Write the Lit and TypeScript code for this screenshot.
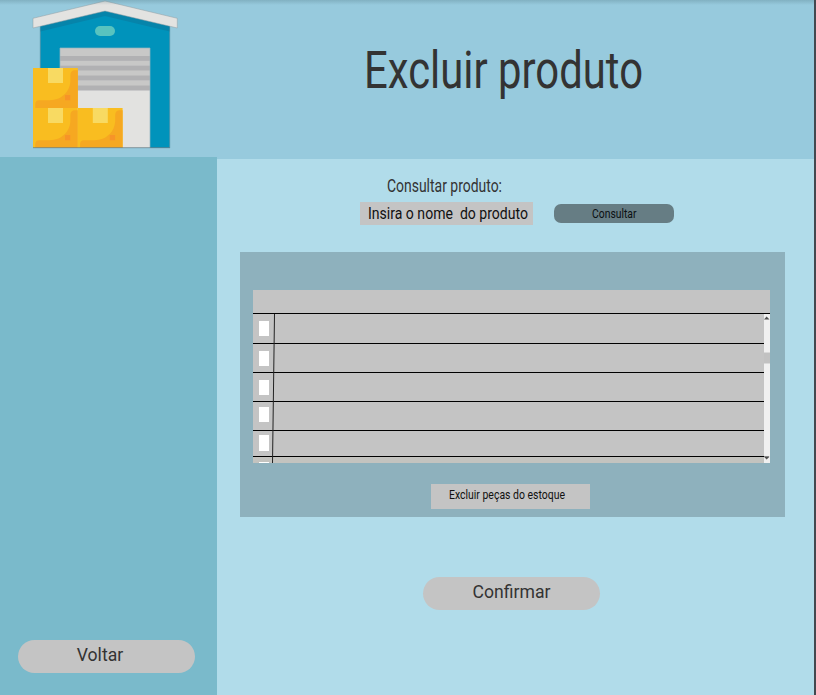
import { LitElement, html, svg, css } from "lit";
import { customElement, property } from "lit/decorators.js";

/** A line of text squeezed horizontally to a given width. */
@customElement("narrow-text")
export class NarrowText extends LitElement {
  @property() text = "";
  @property({ type: Number }) size = 16;
  @property({ type: Number }) width = 100;

  static styles = css`
    :host { display: block; }
    svg { display: block; overflow: visible; }
    text { font-family: Roboto, "Liberation Sans", sans-serif; fill: currentColor; white-space: pre; }
  `;

  render() {
    return html`<svg width=${this.width} height=${this.size}>
      <text x="0" y=${this.size} font-size=${this.size} textLength=${this.width}
        lengthAdjust="spacingAndGlyphs">${this.text}</text>
    </svg>`;
  }
}

@customElement("warehouse-logo")
export class WarehouseLogo extends LitElement {
  static styles = css`
    :host { display: block; }
    svg { display: block; }
  `;

  private box(x: number, y: number) {
    return svg`<g transform="translate(${x} ${y})">
      <rect width="44.8" height="40" fill="#f9bd20"/>
      <path d="M44.8 2.2H42Q37.400 2.200 37.400 7V12C37.400 24 28 32.200 17 32.200H6Q2.300 32.200 2.300 36V40H44.800Z" fill="#f6a821"/>
      <rect x="15" width="15" height="15" fill="#f8da62"/>
      <rect x="32" y="27" width="5.300" height="5.300" fill="#f79428"/>
    </g>`;
  }

  render() {
    return html`<svg width="217" height="157" viewBox="0 0 217 157">
      <path d="M40.300 24L105 9L169.700 24V148H40.300Z" fill="#0093bb"/>
      <path d="M40.300 24L105 8L169.700 24V31.500L105 16L40.300 31.500Z" fill="#0684aa"/>
      <path d="M40.300 27V68M169.700 27V148" stroke="#4f8ea3" stroke-width=".7"/>
      <path d="M33 18.300L105 1L177.300 18.300V28L105 11L33 28Z" fill="#e3e3e1" stroke="#8e9ca2" stroke-width=".5"/>
      <rect x="95" y="26" width="20" height="10" rx="5" fill="#58c3bf"/>
      <rect x="60" y="48" width="90" height="100" fill="#e2e2e0"/>
      <rect x="60" y="48" width="90" height="42.500" fill="#c8c8c7"/>
      ${[56, 65.7, 75.5, 85.5].map(
        (y) => svg`<rect x="60" y=${y} width="90" height="4.800" fill="#b1b1b3"/>`
      )}
      <path d="M60 148V48H150V148" fill="none" stroke="#93b5c0" stroke-width=".7"/>
      ${this.box(33, 68)}${this.box(33, 108)}${this.box(77.8, 108)}
      <path d="M33 147.700H170" stroke="#64808a" stroke-width=".8"/>
    </svg>`;
  }
}

@customElement("app-root")
export class AppRoot extends LitElement {
  private rows = [
    { height: 29, top: 7, check: 15 },
    { height: 28, top: 7, check: 15 },
    { height: 28, top: 7, check: 15 },
    { height: 28, top: 5, check: 15 },
    { height: 25, top: 4, check: 16 },
    { height: 6, top: 5, check: 1 },
  ];

  static styles = css`
    :host { display: block; }
    * { box-sizing: border-box; }
    .page {
      position: relative; display: flex; width: 816px; height: 695px; overflow: hidden;
      border-right: 2px solid #43484f; background: #b1dcea; color: #333;
      font-family: Roboto, "Liberation Sans", sans-serif;
    }
    .shade {
      position: absolute; top: 0; left: 0; right: 0; height: 5px;
      background: linear-gradient(rgba(80, 120, 130, .3), rgba(80, 120, 130, 0));
    }
    .left { width: 217px; display: flex; flex-direction: column; }
    .brand { height: 157px; background: #97cadd; }
    .side { flex: 1; background: #7abacb; display: flex; align-items: flex-end; padding: 0 0 22px 18px; }
    .pill {
      width: 177px; height: 33px; border: 0; border-radius: 17px; background: #c4c4c4;
      color: #333; font: 17.6px/30px Roboto, "Liberation Sans", sans-serif; text-align: center; padding: 0 0 3px;
    }
    .back { padding-right: 13px; }
    .right { flex: 1; display: flex; flex-direction: column; }
    .header { height: 159px; background: #97cadd; padding: 37px 0 0 147px; }
    .main { flex: 1; display: flex; flex-direction: column; }
    .label { padding: 15px 0 0 170px; height: 43px; }
    .search { display: flex; gap: 21px; padding-left: 143px; height: 23px; }
    .field { width: 173px; height: 23px; background: #c4c4c4; color: #111; padding: 0 0 0 8px; }
    .query {
      width: 120px; height: 19px; margin-top: 2px; border-radius: 7px; background: #667d84;
      color: #0b1012; padding: 1px 0 0 38px;
    }
    .panel { width: 545px; height: 265px; margin: 27px 0 0 23px; background: #8eb1bd; padding: 38px 0 0 13px; }
    .table { width: 517px; background: #c4c4c4; }
    .head { height: 24px; border-bottom: 1px solid #000; }
    .body { display: flex; height: 149px; }
    .rows { position: relative; width: 511px; }
    .row { border-bottom: 1px solid #000; padding-left: 6px; box-sizing: content-box; width: 505px; }
    .row.last { border: 0; background: #c3c3bf; }
    .check { display: block; width: 10px; background: #fff; }
    .divider { position: absolute; left: 18px; top: 0; }
    .scroll { width: 6px; background: #f0f0f0; }
    .scroll svg { display: block; }
    .remove { width: 159px; height: 25px; margin: 21px 0 0 178px; background: #c4c4c4; color: #111; padding: 1px 0 0 18px; }
    .confirm { margin: 60px 0 0 206px; }
  `;

  render() {
    return html`<div class="page">
      <div class="left">
        <div class="brand"><warehouse-logo></warehouse-logo></div>
        <div class="side"><button class="pill back">Voltar</button></div>
      </div>
      <div class="right">
        <div class="header"><narrow-text text="Excluir produto" size="51" width="279"></narrow-text></div>
        <div class="main">
          <div class="label"><narrow-text text="Consultar produto:" size="17.5" width="115"></narrow-text></div>
          <div class="search">
            <div class="field"><narrow-text text="Insira o nome  do produto" size="17" width="160"></narrow-text></div>
            <div class="query"><narrow-text text="Consultar" size="13" width="44.500"></narrow-text></div>
          </div>
          <div class="panel">
            <div class="table">
              <div class="head"></div>
              <div class="body">
                <div class="rows">
                  ${this.rows.map((r, i) => html`<div class="row ${i === 5 ? "last" : ""}"
                    style="height:${r.height - r.top}px;padding-top:${r.top}px">
                    <span class="check" style="height:${r.check}px"></span>
                  </div>`)}
                  <svg class="divider" width="5" height="149">
                    <path d="M3.500 0L1.500 149" stroke="#222" stroke-width="1"/>
                  </svg>
                </div>
                <div class="scroll">
                  <svg width="6" height="149">
                    <path d="M0 5.500L2.600 2.500L5.500 5.500Z" fill="#505050"/>
                    <rect y="38.500" width="6" height="11" fill="#c1c1c1"/>
                    <path d="M0 142.500H5" stroke="#999"/>
                    <path d="M0 142.700L2.600 145.500L5.500 142.700Z" fill="#505050"/>
                  </svg>
                </div>
              </div>
            </div>
            <div class="remove"><narrow-text text="Excluir peças do estoque" size="13.500" width="116"></narrow-text></div>
          </div>
          <button class="pill confirm">Confirmar</button>
        </div>
      </div>
      <div class="shade"></div>
    </div>`;
  }
}
